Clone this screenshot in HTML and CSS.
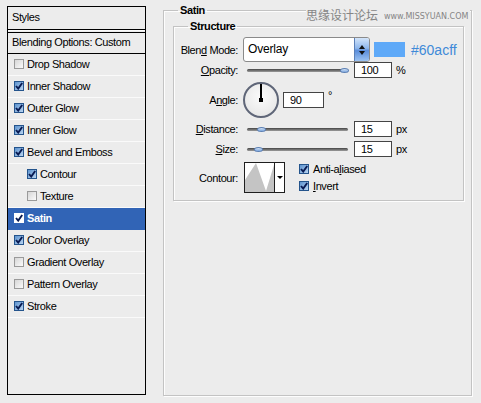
FILE: index.html
```html
<!DOCTYPE html>
<html>
<head>
<meta charset="utf-8">
<link rel="stylesheet" href="styles.css">
</head>
<body>
<div class="app">
  <div class="styles-panel">
    <div class="sp-head">Styles</div>
    <div class="sp-blend">Blending Options: Custom</div>
    <ul class="sp-list">
      <li class="item"><span class="cb"></span>Drop Shadow</li>
      <li class="item"><span class="cb on"><svg viewBox="0 0 8 8"><path d="M1 4 L3.2 6.6 L7.2 1"/></svg></span>Inner Shadow</li>
      <li class="item"><span class="cb on"><svg viewBox="0 0 8 8"><path d="M1 4 L3.2 6.6 L7.2 1"/></svg></span>Outer Glow</li>
      <li class="item"><span class="cb on"><svg viewBox="0 0 8 8"><path d="M1 4 L3.2 6.6 L7.2 1"/></svg></span>Inner Glow</li>
      <li class="item"><span class="cb on"><svg viewBox="0 0 8 8"><path d="M1 4 L3.2 6.6 L7.2 1"/></svg></span>Bevel and Emboss</li>
      <li class="item sub"><span class="cb on"><svg viewBox="0 0 8 8"><path d="M1 4 L3.2 6.6 L7.2 1"/></svg></span>Contour</li>
      <li class="item sub"><span class="cb"></span>Texture</li>
      <li class="item sel"><span class="cb on"><svg viewBox="0 0 8 8"><path d="M1 4 L3.2 6.6 L7.2 1"/></svg></span>Satin</li>
      <li class="item"><span class="cb on"><svg viewBox="0 0 8 8"><path d="M1 4 L3.2 6.6 L7.2 1"/></svg></span>Color Overlay</li>
      <li class="item"><span class="cb"></span>Gradient Overlay</li>
      <li class="item"><span class="cb"></span>Pattern Overlay</li>
      <li class="item"><span class="cb on"><svg viewBox="0 0 8 8"><path d="M1 4 L3.2 6.6 L7.2 1"/></svg></span>Stroke</li>
    </ul>
  </div>

  <div class="main">
    <fieldset class="grp outer">
      <legend>Satin</legend>
      <fieldset class="grp inner">
        <legend>Structure</legend>

        <div class="row r-blend">
          <span class="lbl">Blen<u>d</u> Mode:</span>
          <div class="select">
            <span class="val">Overlay</span>
            <span class="spin"><i class="up"></i><i class="down"></i></span>
          </div>
          <span class="swatch"></span>
          <span class="hex">#60acff</span>
        </div>

        <div class="row r-line">
          <span class="lbl"><u>O</u>pacity:</span>
          <div class="slider"><span class="thumb" style="left:93px"></span></div>
          <span class="num">100</span>
          <span class="unit">%</span>
        </div>

        <div class="row r-angle">
          <span class="lbl">A<u>n</u>gle:</span>
          <div class="dial"><span class="needle"></span><span class="hub"></span></div>
          <span class="num wide">90</span>
          <span class="deg">°</span>
        </div>

        <div class="row r-line r-dist">
          <span class="lbl"><u>D</u>istance:</span>
          <div class="slider"><span class="thumb" style="left:10px"></span></div>
          <span class="num">15</span>
          <span class="unit">px</span>
        </div>

        <div class="row r-line r-size">
          <span class="lbl"><u>S</u>ize:</span>
          <div class="slider"><span class="thumb" style="left:7px"></span></div>
          <span class="num">15</span>
          <span class="unit">px</span>
        </div>

        <div class="row r-contour">
          <span class="lbl">Contour:</span>
          <div class="cbox">
            <svg class="cgraph" width="29" height="29" viewBox="0 0 29 29"><polygon points="0,29 0,17 11,0 21,28 29,2 29,29" fill="#c4c4c4"/></svg>
            <span class="carrow"><i></i></span>
          </div>
          <div class="checks">
            <div class="chk"><span class="cb on"><svg viewBox="0 0 8 8"><path d="M1 4 L3.2 6.6 L7.2 1"/></svg></span>Anti-a<u>l</u>iased</div>
            <div class="chk"><span class="cb on"><svg viewBox="0 0 8 8"><path d="M1 4 L3.2 6.6 L7.2 1"/></svg></span><u>I</u>nvert</div>
          </div>
        </div>
      </fieldset>
    </fieldset>
    <div class="watermark">思缘设计论坛<span class="wm-en">www.MISSYUAN.COM</span></div>
  </div>
</div>
</body>
</html>
```

FILE: styles.css
```css
* { box-sizing: border-box; }
html, body { margin: 0; padding: 0; }
body {
  width: 481px;
  height: 403px;
  overflow: hidden;
  background: #ececec;
  color: #000;
  font-family: "Liberation Sans", Arial, sans-serif;
  font-size: 11px;
  letter-spacing: -0.4px;
}
u { text-decoration: underline; text-underline-offset: 1px; }

.app { display: flex; align-items: flex-start; height: 403px; }

/* ---------- left styles list ---------- */
.styles-panel {
  flex: none;
  margin: 6px 0 0 7px;
  width: 139px;
  height: 389px;
  border: 1px solid #000;
  background: #ececec;
  display: flex;
  flex-direction: column;
}
.sp-head {
  height: 23px;
  line-height: 20px;
  padding-left: 4px;
  border-bottom: 1px solid #000;
  margin-bottom: 2px;
  box-shadow: 0 1px 0 #fafafa;
}
.sp-blend {
  height: 22px;
  line-height: 18px;
  padding-left: 4px;
  border-top: 1px solid #000;
  border-bottom: 1px solid #000;
}
.sp-list { list-style: none; margin: 0; padding: 0; }
.item {
  height: 22px;
  display: flex;
  align-items: center;
  padding-left: 6px;
  padding-bottom: 2px;
  border-bottom: 1px solid #fafafa;
}
.item.sub { padding-left: 19px; }
.item.sel {
  background: #3164b6;
  border-bottom-color: #3164b6;
  color: #fff;
  font-weight: bold;
}

/* checkbox */
.cb {
  flex: none;
  width: 10px;
  height: 10px;
  margin-right: 3px;
  border: 1px solid #9a9a9a;
  background: linear-gradient(135deg, #d6d6d6, #fbfbfb);
  display: flex;
  align-items: center;
  justify-content: center;
}
.cb.on {
  border-color: #24548c;
  background: linear-gradient(135deg, #5d93cf, #b9d4f0);
}
.cb svg { width: 8px; height: 8px; display: block; }
.cb svg path { fill: none; stroke: #081a52; stroke-width: 1.9; }
.item.sel .cb { background: #fff; border-color: #fff; }

/* ---------- right area ---------- */
.main { position: relative; flex: none; margin-left: 17px; }

.grp {
  margin: 0;
  padding: 0;
  border: 1px solid #c3c3c3;
  box-shadow: 1px 1px 0 #fdfdfd, inset 1px 1px 0 #fdfdfd;
  min-inline-size: 0;
}
.grp > legend {
  margin-left: 14px;
  padding: 0 2px;
  font-weight: bold;
  line-height: 13px;
}
.outer {
  margin-top: 4px;
  width: 309px;
  height: 392px;
}
.inner {
  margin: 3px 7px 0 9px;
  padding-bottom: 6px;
}

.row { display: flex; align-items: center; }
.lbl { flex: none; width: 64px; text-align: right; white-space: nowrap; }

.r-blend { height: 25px; margin-top: 4px; }
.r-line { height: 16px; }
.r-angle { height: 36px; margin-top: 4px; }
.r-dist { margin-top: 3px; }
.r-size { margin-top: 4px; }
.r-contour { height: 32px; margin-top: 5px; align-items: flex-start; }
.r-contour .lbl { align-self: center; }

/* select */
.select {
  margin-left: 5px;
  width: 127px;
  height: 25px;
  border: 1px solid #8a8a8a;
  border-radius: 3px;
  background: #fff;
  display: flex;
  align-items: stretch;
}
.select .val { flex: 1; padding-left: 4px; font-size: 12px; line-height: 23px; letter-spacing: -0.2px; }
.spin {
  width: 15px;
  border-left: 1px solid #5b80b8;
  border-radius: 0 2px 2px 0;
  background: linear-gradient(#d3e5fa, #8db6ec 45%, #5a8dda 55%, #9cc3f2);
  display: flex;
  flex-direction: column;
  align-items: center;
  justify-content: center;
  gap: 2px;
}
.spin i { display: block; width: 0; height: 0; border-left: 3px solid transparent; border-right: 3px solid transparent; }
.spin .up { border-bottom: 4px solid #111; }
.spin .down { border-top: 4px solid #111; }

.swatch { flex: none; margin-left: 4px; width: 31px; height: 15px; background: #5ea9f8; }
.hex { margin-left: 6px; color: #3f8ad8; font-size: 14px; letter-spacing: 0; }

/* slider */
.slider {
  position: relative;
  flex: none;
  margin-left: 9px;
  width: 101px;
  height: 3px;
  border-radius: 2px;
  background: linear-gradient(#444, #9c9c9c);
}
.thumb {
  position: absolute;
  top: -1px;
  width: 9px;
  height: 5px;
  border-radius: 50%;
  border: 1px solid #5b7fb3;
  background: linear-gradient(#d8e7f8, #7aa4dc);
}

/* numeric boxes */
.num {
  flex: none;
  margin-left: 6px;
  width: 38px;
  height: 16px;
  border: 1px solid #444;
  background: #fff;
  padding-left: 6px;
  line-height: 14px;
}
.num.wide { margin-left: 4px; width: 41px; }
.unit { margin-left: 4px; }
.deg { margin-left: 4px; align-self: flex-start; margin-top: 7px; }

/* dial */
.dial {
  position: relative;
  flex: none;
  margin-left: 5px;
  width: 36px;
  height: 36px;
  border-radius: 50%;
  border: 2px solid #5f6678;
  background: radial-gradient(circle at 50% 40%, #fbfbfb, #e2e2e2);
}
.needle { position: absolute; left: 15px; top: 0; width: 2px; height: 16px; background: #000; }
.hub { position: absolute; left: 14px; top: 14px; width: 4px; height: 4px; background: #000; }

/* contour */
.cbox {
  flex: none;
  margin-left: 6px;
  width: 41px;
  height: 31px;
  border: 1px solid #1e1e1e;
  background: #fff;
  display: flex;
}
.cgraph { display: block; flex: none; }
.carrow {
  flex: 1;
  border-left: 1px solid #1e1e1e;
  display: flex;
  align-items: center;
  justify-content: center;
}
.carrow i { display: block; width: 0; height: 0; border-left: 3px solid transparent; border-right: 3px solid transparent; border-top: 3px solid #000; }

.checks { margin-left: 14px; display: flex; flex-direction: column; gap: 4px; }
.chk { display: flex; align-items: center; height: 13px; }
.chk .cb { margin-right: 4px; }

/* watermark */
.watermark {
  position: absolute;
  top: 8px;
  left: 143px;
  padding-right: 2px;
  background: #ececec;
  color: #858585;
  font-family: "Noto Sans CJK SC", sans-serif;
  font-size: 12px;
  line-height: 14px;
  letter-spacing: 0;
  white-space: nowrap;
}
.wm-en {
  margin-left: 6px;
  font-family: "DejaVu Sans", sans-serif;
  font-size: 8px;
  vertical-align: 1px;
}
```
